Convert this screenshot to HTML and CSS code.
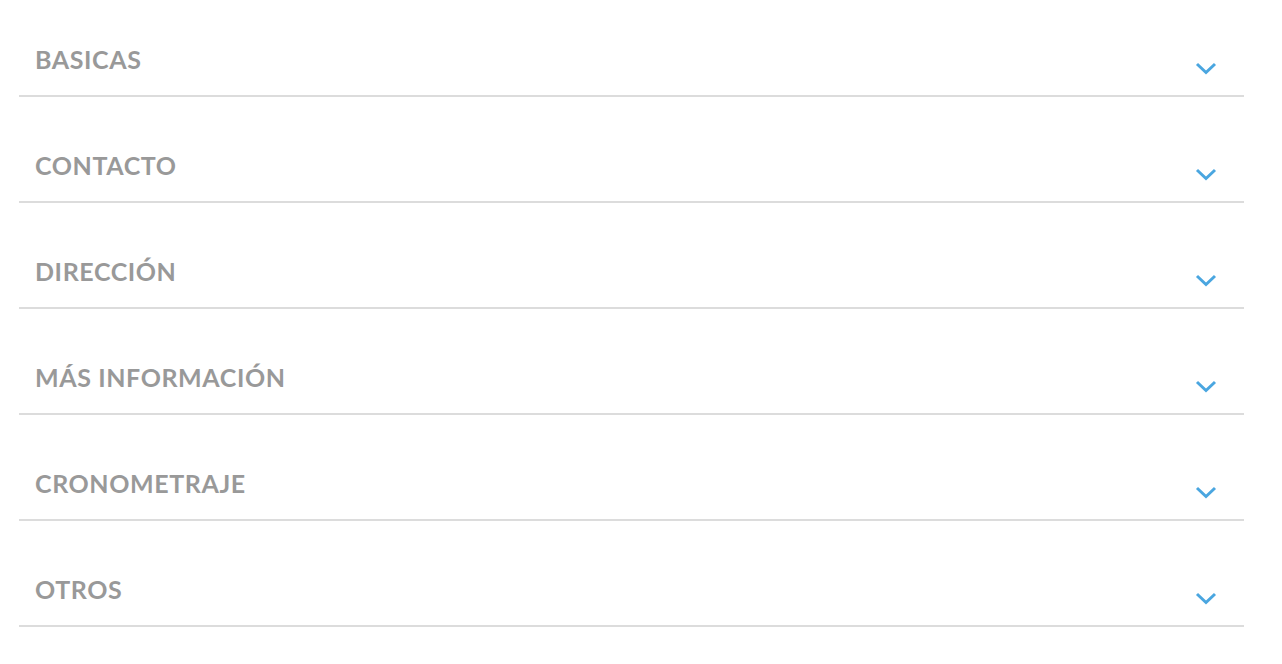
FILE: index.html
```html
<!DOCTYPE html>
<html lang="es">
<head>
<meta charset="utf-8">
<title>Secciones</title>
<link rel="stylesheet" href="styles.css">
</head>
<body>
<div class="accordion">
  <div class="row"><span class="title">BASICAS</span><svg class="chev" width="22" height="14" viewBox="0 0 22 14"><polyline points="2,3 11,11.5 20,3"/></svg></div>
  <div class="row"><span class="title">CONTACTO</span><svg class="chev" width="22" height="14" viewBox="0 0 22 14"><polyline points="2,3 11,11.5 20,3"/></svg></div>
  <div class="row"><span class="title">DIRECCIÓN</span><svg class="chev" width="22" height="14" viewBox="0 0 22 14"><polyline points="2,3 11,11.5 20,3"/></svg></div>
  <div class="row"><span class="title">MÁS INFORMACIÓN</span><svg class="chev" width="22" height="14" viewBox="0 0 22 14"><polyline points="2,3 11,11.5 20,3"/></svg></div>
  <div class="row"><span class="title">CRONOMETRAJE</span><svg class="chev" width="22" height="14" viewBox="0 0 22 14"><polyline points="2,3 11,11.5 20,3"/></svg></div>
  <div class="row"><span class="title">OTROS</span><svg class="chev" width="22" height="14" viewBox="0 0 22 14"><polyline points="2,3 11,11.5 20,3"/></svg></div>
</div>
</body>
</html>
```
FILE: styles.css
```css
html, body {
  margin: 0;
  padding: 0;
  background: #ffffff;
}
body {
  font-family: Lato, "Liberation Sans", sans-serif;
}
.accordion {
  display: flex;
  flex-direction: column;
  gap: 10px;
  padding: 1px 38px 0 19px;
}
.row {
  display: flex;
  justify-content: space-between;
  align-items: flex-start;
  height: 30px;
  padding: 43px 27px 21px 16px;
  border-bottom: 2px solid #dcdcdc;
}
.title {
  font-size: 25px;
  line-height: 30px;
  font-weight: 700;
  letter-spacing: 0.6px;
  color: #999999;
}
.chev {
  margin-top: 17px;
  display: block;
}
.chev polyline {
  fill: none;
  stroke: #4aa6e0;
  stroke-width: 3;
}
```
